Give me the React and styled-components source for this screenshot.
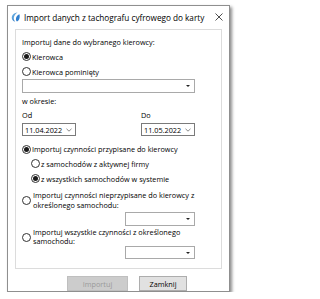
import styled, { createGlobalStyle } from "styled-components";

const GlobalStyle = createGlobalStyle`
  body {
    margin: 0;
    background: #fff;
    font-family: "Open Sans", "Noto Sans", sans-serif;
    font-size: 7.3px;
    color: #000;
  }
`;

const Window = styled.div`
  margin: 5px 0 0 7px;
  width: 221px;
  height: 285px;
  border: 1px solid #8f8f8f;
  box-shadow: 2px 2px 3px rgba(0, 0, 0, 0.45);
  background: #fff;
  display: flex;
  flex-direction: column;
`;

const TitleBar = styled.div`
  height: 22px;
  display: flex;
  align-items: center;
  padding: 0 6px 0 3px;
  gap: 4px;
`;

const Title = styled.div`
  flex: 1;
  font-size: 8.2px;
  white-space: nowrap;
`;

const Panel = styled.div`
  margin: 1px 7px 0;
  height: 233px;
  border: 1px solid #dcdcdc;
  padding: 5px 6px 0;
  display: flex;
  flex-direction: column;
`;

const Line = styled.div`
  height: ${p => p.h || 14}px;
  margin-top: ${p => p.mt || 0}px;
  display: flex;
  align-items: center;
  padding-left: ${p => p.indent || 0}px;
  white-space: nowrap;
`;

const Radio = styled.span`
  width: 9px;
  height: 9px;
  box-sizing: border-box;
  border: 1px solid #333;
  border-radius: 50%;
  background: #fff;
  display: inline-flex;
  align-items: center;
  justify-content: center;
  flex-shrink: 0;
  margin-right: 1px;
  &::after {
    content: "";
    width: 5px;
    height: 5px;
    border-radius: 50%;
    background: ${p => (p.checked ? "#1a1a1a" : "transparent")};
  }
`;

const MultiRow = styled.div`
  display: flex;
  align-items: center;
  margin-top: ${p => p.mt || 0}px;
`;

const MultiLabel = styled.div`
  line-height: ${p => p.lh || 9}px;
  padding-left: 1px;
`;

const Select = styled.div`
  height: ${p => p.h || 14}px;
  box-sizing: border-box;
  width: ${p => p.w}px;
  margin-top: ${p => p.mt || 0}px;
  margin-left: ${p => p.ml || 0}px;
  border: 1px solid #a9a9a9;
  background: #fff;
  display: flex;
  align-items: center;
  justify-content: flex-end;
  padding-right: 4px;
  &::after {
    content: "";
    border-left: 2px solid transparent;
    border-right: 2px solid transparent;
    border-top: 2.5px solid #222;
  }
`;

const DateRow = styled.div`
  display: flex;
  justify-content: space-between;
  margin-top: ${p => p.mt || 0}px;
  padding-right: 20px;
`;

const DateCol = styled.div`
  width: 54px;
`;

const DateBox = styled.div`
  height: 13px;
  box-sizing: border-box;
  border: 1px solid #7a7a7a;
  display: flex;
  align-items: center;
  justify-content: space-between;
  padding: 0 3px 0 2px;
`;

const Footer = styled.div`
  display: flex;
  gap: 11px;
  padding: 7px 0 0 59px;
`;

const Button = styled.div`
  width: ${p => p.w}px;
  height: 15px;
  box-sizing: border-box;
  display: flex;
  align-items: center;
  justify-content: center;
  border: 1px solid ${p => (p.disabled ? "#bfbfbf" : "#adadad")};
  background: ${p => (p.disabled ? "#cccccc" : "#e1e1e1")};
  color: ${p => (p.disabled ? "#9a9a9a" : "#000")};
`;

function AppIcon() {
  return (
    <svg width="9" height="10" viewBox="0 0 9 10">
      <defs>
        <linearGradient id="g" x1="0" y1="0" x2="1" y2="1">
          <stop offset="0" stopColor="#7fc4f0" />
          <stop offset="1" stopColor="#1c64b4" />
        </linearGradient>
      </defs>
      <path d="M6.5 0.5 C2.5 0.8 0.5 3.5 0.8 6.3 C1 8.4 2.6 9.6 4.2 9.5 C2.6 8.3 2.3 5.8 3.4 3.8 C4.2 2.3 5.3 1.2 6.5 0.5 Z" fill="url(#g)" />
      <path d="M8.5 2.2 C6.3 3 4.8 5 4.9 7.4 C5 8.4 5.4 9.2 6 9.6 C7.8 8.6 8.8 6.6 8.7 4.4 C8.7 3.6 8.6 2.8 8.5 2.2 Z" fill="#2f7fcf" />
    </svg>
  );
}

function CloseIcon() {
  return (
    <svg width="8" height="8" viewBox="0 0 8 8">
      <path d="M0.5 0.5 L7.5 7.5 M7.5 0.5 L0.5 7.5" stroke="#222" strokeWidth="0.8" />
    </svg>
  );
}

function Chevron() {
  return (
    <svg width="6" height="4" viewBox="0 0 6 4">
      <path d="M0.5 0.8 L3 3.2 L5.5 0.8" fill="none" stroke="#555" strokeWidth="0.7" />
    </svg>
  );
}

export default function App() {
  return (
    <>
      <GlobalStyle />
      <Window>
        <TitleBar>
          <AppIcon />
          <Title>Import danych z tachografu cyfrowego do karty</Title>
          <CloseIcon />
        </TitleBar>
        <Panel>
          <Line>Importuj dane do wybranego kierowcy:</Line>
          <Line h={15}><Radio checked />Kierowca</Line>
          <Line h={15}><Radio />Kierowca pominięty</Line>
          <Select w={173} />
          <Line mt={1}>w okresie:</Line>
          <DateRow>
            <DateCol><Line>Od</Line></DateCol>
            <DateCol><Line>Do</Line></DateCol>
          </DateRow>
          <DateRow mt={1}>
            <DateCol><DateBox>11.04.2022<Chevron /></DateBox></DateCol>
            <DateCol><DateBox>11.05.2022<Chevron /></DateBox></DateCol>
          </DateRow>
          <Line mt={6}><Radio checked />Importuj czynności przypisane do kierowcy</Line>
          <Line h={15} indent={9}><Radio />z samochodów z aktywnej firmy</Line>
          <Line h={15} indent={9}><Radio checked />z wszystkich samochodów w systemie</Line>
          <MultiRow mt={4}>
            <Radio />
            <MultiLabel lh={10}>Importuj czynności nieprzypisane do kierowcy z<br />określonego samochodu:</MultiLabel>
          </MultiRow>
          <Select w={70} ml={103} mt={2} />
          <MultiRow mt={2}>
            <Radio />
            <MultiLabel>Importuj wszystkie czynności z określonego<br />samochodu:</MultiLabel>
          </MultiRow>
          <Select w={70} ml={103} h={13} />
        </Panel>
        <Footer>
          <Button w={61} disabled>Importuj</Button>
          <Button w={48}>Zamknij</Button>
        </Footer>
      </Window>
    </>
  );
}
